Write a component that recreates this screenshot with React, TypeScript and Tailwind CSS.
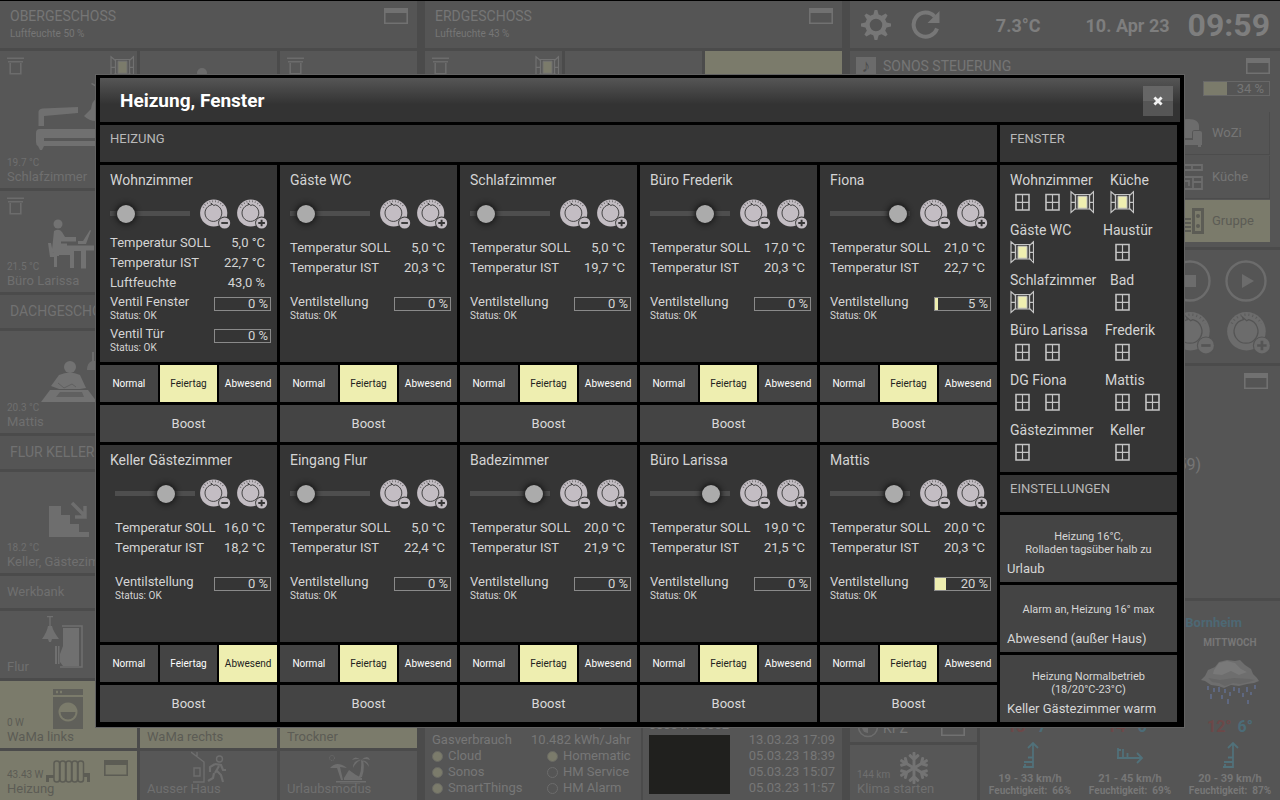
import React from "react";
import { FaRegSnowflake } from "react-icons/fa";

type Meter = { label: string; value: number };
type Room = {
  name: string;
  target: number;
  rows: [string, string][];
  meters: Meter[];
  mode: string;
  dense?: boolean;
  inset?: boolean;
};

const MODES = ["Normal", "Feiertag", "Abwesend"];

function room(name: string, target: number, soll: string, ist: string, valve = 0, mode = "Feiertag", inset = false): Room {
  return {
    name,
    target,
    rows: [
      ["Temperatur SOLL", soll],
      ["Temperatur IST", ist],
    ],
    meters: [{ label: "Ventilstellung", value: valve }],
    mode,
    inset,
  };
}

const ROOMS: Room[][] = [
  [
    {
      name: "Wohnzimmer",
      target: 5,
      rows: [
        ["Temperatur SOLL", "5,0 °C"],
        ["Temperatur IST", "22,7 °C"],
        ["Luftfeuchte", "43,0 %"],
      ],
      meters: [
        { label: "Ventil Fenster", value: 0 },
        { label: "Ventil Tür", value: 0 },
      ],
      mode: "Feiertag",
      dense: true,
    },
    room("Gäste WC", 5, "5,0 °C", "20,3 °C"),
    room("Schlafzimmer", 5, "5,0 °C", "19,7 °C"),
    room("Büro Frederik", 17, "17,0 °C", "20,3 °C"),
    room("Fiona", 21, "21,0 °C", "22,7 °C", 5),
  ],
  [
    room("Keller Gästezimmer", 16, "16,0 °C", "18,2 °C", 0, "Abwesend", true),
    room("Eingang Flur", 5, "5,0 °C", "22,4 °C"),
    room("Badezimmer", 20, "20,0 °C", "21,9 °C"),
    room("Büro Larissa", 19, "19,0 °C", "21,5 °C"),
    room("Mattis", 20, "20,0 °C", "20,3 °C", 20),
  ],
];

type WindowGroup = { name: string; open: boolean[]; pad?: string };
const WINDOWS: [WindowGroup, WindowGroup][] = [
  [{ name: "Wohnzimmer", open: [false, false, true] }, { name: "Küche", open: [true], pad: "pl-[7px]" }],
  [{ name: "Gäste WC", open: [true] }, { name: "Haustür", open: [false] }],
  [{ name: "Schlafzimmer", open: [true] }, { name: "Bad", open: [false], pad: "pl-[7px]" }],
  [{ name: "Büro Larissa", open: [false, false] }, { name: "Frederik", open: [false], pad: "pl-[2px]" }],
  [{ name: "DG Fiona", open: [false, false] }, { name: "Mattis", open: [false, false], pad: "pl-[2px]" }],
  [{ name: "Gästezimmer", open: [false] }, { name: "Keller", open: [false], pad: "pl-[7px]" }],
];

/* ---------- icons ---------- */

function Knob({ sign, className, bg }: { sign: "minus" | "plus"; className?: string; bg: string }) {
  return (
    <svg viewBox="0 0 31 31" className={className} aria-hidden="true">
      <circle cx="13.7" cy="15" r="13.6" fill="currentColor" />
      <path d="M3.300 9.500A11.800 11.800 0 0 1 24.100 9.500" fill="none" stroke={bg} strokeWidth="1.700" strokeDasharray="0.700 2.100" opacity="0.750" />
      <path d="M11.6 6.800 A8.4 8.4 0 1 0 15.2 6.800 L13.9 7.600 L11 5.200 Z" fill="none" stroke={bg} strokeWidth="0.9" />
      <circle cx="24.6" cy="25" r="6.4" fill={bg} />
      <circle cx="24.6" cy="25" r="5.6" fill="currentColor" />
      <path d={sign === "minus" ? "M21.3 25h6.6" : "M21.3 25h6.6M24.6 21.7v6.6"} stroke={bg} strokeWidth="1.9" />
    </svg>
  );
}

function ClosedWindow() {
  return (
    <svg viewBox="0 0 24 24" className="size-6" aria-hidden="true">
      <path d="M6 4.500h13v15.500H6z" fill="none" stroke="#c4c4c4" strokeWidth="1.600" />
      <path d="M12.500 5v15M6 12.300h13" stroke="#c4c4c4" strokeWidth="1.200" />
    </svg>
  );
}

function OpenWindow({ stroke = "#c4c4c4", fill = "#eeeeb0" }: { stroke?: string; fill?: string }) {
  return (
    <svg viewBox="0 0 24 24" className="size-6" aria-hidden="true">
      <path d="M5.500 4.500h14v14.500h-14z" fill="none" stroke={stroke} strokeWidth="1.200" />
      <path d="M8 6.200h9v12H8z" fill={fill} stroke={stroke} strokeWidth="1" />
      <path d="M1 1.700L5.500 5.500v13L1 22.500zM23.500 1.700L19.500 5.500v13l4 4zM1 12.300h4.500M19.500 12.300h4" fill="none" stroke={stroke} strokeWidth="1.200" />
    </svg>
  );
}

function PopupIcon({ className = "text-[#717171]" }: { className?: string }) {
  return (
    <svg viewBox="0 0 24 16" className={"h-4 w-6 shrink-0 " + className} aria-hidden="true">
      <path d="M0 0h24v16H0zM1.6 5v9.4h20.8V5z" fill="currentColor" fillRule="evenodd" />
    </svg>
  );
}

function Shutter() {
  return (
    <svg viewBox="0 0 17 18" className="h-[18px] w-[17px] text-[#6c6c6c]" aria-hidden="true">
      <path d="M0 1.2h17M1 4.8h15M3.2 6v10.8h10.6V6" fill="none" stroke="currentColor" strokeWidth="1.6" />
    </svg>
  );
}

function Bed() {
  return (
    <svg viewBox="0 0 60 70" className="h-[70px] w-[60px] text-[#707070]" aria-hidden="true">
      <path d="M2.500 43V29q0-3 4-3.500L42 24v6L8 33v10zM0 50q0-4 4-4h56v17H8l-2 4H4l-2-4q-2-1-2-4zM8 55v3h52v-3zM60 2l-4-2-1 1 5 3zM60 16q-4 2-5 10l-7 7q5 5 12 5z" fill="currentColor" fillRule="evenodd" />
    </svg>
  );
}

function DeskPerson() {
  return (
    <svg viewBox="0 0 50 50" className="h-[50px] w-[50px] text-[#727272]" aria-hidden="true">
      <circle cx="10" cy="5" r="4.500" fill="currentColor" />
      <path d="M6 12q5-3 8 1l3 5h11v4.500H13v2h6v2h27v5h-8v18h-5V32h-7v17h-4V36H10q-5 0-6-5zM30 22h5l7-11 1 .5L38 25h-8zM0 24h3l2 10h6v3H9v11H6V38H2z" fill="currentColor" />
    </svg>
  );
}

function TablePerson() {
  return (
    <svg viewBox="0 0 56 50" className="h-[50px] w-[56px] text-[#727272]" aria-hidden="true">
      <circle cx="29" cy="15" r="6" fill="currentColor" />
      <path d="M18 23q11-5 21 0l6 13-6 1H18l-8-3z" fill="currentColor" />
      <path d="M9 38h38l9 12H0z" fill="currentColor" />
      <path d="M17 31l6 5 8-4 4 3" fill="none" stroke="#606060" strokeWidth="1" />
      <path d="M19 40h22l2 5H15z" fill="#606060" />
      <path d="M51 0v9q-5 2-5 9h10v-9h-3V0z" fill="currentColor" opacity=".8" />
    </svg>
  );
}

function Stairs() {
  return (
    <svg viewBox="0 0 40 36" className="h-9 w-10 text-[#6e6e6e]" aria-hidden="true">
      <path d="M0 5h12v9h9v9h9v8h10v5H0z" fill="currentColor" />
      <path d="M23 2l12 12M36 5v11H26" fill="none" stroke="currentColor" strokeWidth="3.500" />
    </svg>
  );
}

function DoorLamp() {
  return (
    <svg viewBox="0 0 42 52" className="h-[52px] w-[42px] text-[#707070]" aria-hidden="true">
      <path d="M5 .5h6M8 0v10" stroke="currentColor" strokeWidth="1.3" />
      <path d="M6 10h4q1 5 7 13H10l-1 3H7l-1-3H0q5-7 6-13zM21 12h16v38H21l-3-4v-8l3-8zM13 30h2v18h-2zM16 30h1.500v18H16z" fill="currentColor" />
      <path d="M20 10h20v41H18" fill="none" stroke="currentColor" strokeWidth="1.500" />
    </svg>
  );
}

function Washer() {
  return (
    <svg viewBox="0 0 30 40" className="h-10 w-[30px] text-[#60605a]" aria-hidden="true">
      <path d="M0 0h30v6H0zM3 1.800v2.400h2V1.800zM7 1.800v2.400h2V1.800zM0 8h30v32H0zM15 13.500a9.500 9.500 0 1 0 .01 0z" fill="currentColor" fillRule="evenodd" />
      <path d="M7.500 23h15a7.500 7.500 0 0 1-15 0z" fill="currentColor" />
    </svg>
  );
}

function Radiator() {
  return (
    <svg viewBox="0 0 46 24" className="h-6 w-[46px] text-[#5c5c54]" aria-hidden="true">
      <g fill="none" stroke="currentColor" strokeWidth="1.500">
        {[8, 14, 20, 26, 32].map((x) => (
          <rect key={x} x={x} y="1" width="5.500" height="21" rx="2.500" />
        ))}
      </g>
      <path d="M0 22v-7h8v3H3v4zM38 13h6v9h-3v-5h-3z" fill="currentColor" />
    </svg>
  );
}

function LeaveHouse() {
  return (
    <svg viewBox="0 0 36 34" className="h-[34px] w-9 text-[#6e6e6e]" aria-hidden="true">
      <g fill="none" stroke="currentColor" strokeWidth="1.400">
        <path d="M0 1l13 10v20H2M6 5V1M3 17h6v8H3z" />
        <circle cx="28.500" cy="8" r="3" />
        <path d="M24 13l6 1 2 5h3M24 13l-5 3v5M26 20l4 4 2 7M23 22l-1 5-5 3M28 15l-4 7" strokeWidth="2.200" />
      </g>
    </svg>
  );
}

function Palm() {
  return (
    <svg viewBox="0 0 44 30" className="h-[30px] w-11 text-[#6e6e6e]" aria-hidden="true">
      <path d="M2 14q7-8 17 0l-7-1 3 13h-2L9 14zM33 6q1 10-2 17h3q3-8 1-17zM33 6q-6-5-9 0 6-2 9 0zM33 6q-8 0-8 8 3-6 8-8zM33 6q7-6 9 0-5-2-9 0zM33 6q8 1 8 7-3-5-8-7zM16 24l5-8 7 5 6 3v2H16zM8 27h30v1.500H8zM12 29.500h20V31H12z" fill="currentColor" />
      <circle cx="4" cy="4" r="2.500" fill="none" stroke="currentColor" strokeDasharray="1 1" />
    </svg>
  );
}

function Gear() {
  return (
    <svg viewBox="0 0 30 30" className="size-[30px] text-[#777]" aria-hidden="true">
      <circle cx="15" cy="15" r="8.500" fill="none" stroke="currentColor" strokeWidth="4.500" />
      {[0, 45, 90, 135, 180, 225, 270, 315].map((a) => (
        <path key={a} d="M12.200 5.500L13.600 0h2.800l1.400 5.500z" fill="currentColor" transform={`rotate(${a} 15 15)`} />
      ))}
    </svg>
  );
}

function Reload() {
  return (
    <svg viewBox="0 0 30 30" className="size-[30px] text-[#777]" aria-hidden="true">
      <path d="M23.500 6.500A12 12 0 1 0 26 18.500" fill="none" stroke="currentColor" strokeWidth="4" />
      <path d="M28.500 1v12H16.500z" fill="currentColor" />
    </svg>
  );
}

function RainCloud() {
  return (
    <svg viewBox="0 0 60 48" className="mx-auto h-12 w-[60px]" aria-hidden="true">
      <path d="M1 21l4-4 3-6 7-3 4-5 8-2 8 1 5-1 5 5 6 4 2 5 4 4 2 3-5 2-7 1-8 2-8-1-7 3-6-2-7-1-6-4z" fill="#6e6e6e" />
      <path d="M14 11l5-7 8-2 8 2 6 6 6 3-8 3-8-4-9 4-9-1z" fill="#797979" />
      <path d="M8 19l12 2 14-2 16 1 5 1-6 2-9 2-7-1-8 3-6-3-7-1z" fill="#666666" />
      <path d="M8 27v4M11 35v5M14 29v4M19 28v5M22 36v4M25 30v4M28 40v5M30 33v4M34 28v4M39 29v5M43 34v4M47 28v5M51 33v3M55 26v4M48 41v4" stroke="#606b86" strokeWidth="1.800" />
    </svg>
  );
}

function WindArrow({ east }: { east?: boolean }) {
  return (
    <svg viewBox="0 0 28 28" className={"mx-auto size-7 text-[#51717a] " + (east ? "rotate-90" : "")} aria-hidden="true">
      <path d="M17 27V2M12 7L17 2l5 5M17 26H7M17 21H8M17 16.500h-5M9 26v-3" fill="none" stroke="currentColor" strokeWidth="1.800" />
    </svg>
  );
}

/* ---------- dashboard behind the dialog ---------- */

const PANEL = "bg-[#555555]";
const LIT = "bg-[#7b7b6b] text-[#5c5c55]";

function FloorHeader({ title, humidity }: { title: string; humidity: string }) {
  return (
    <header className={"flex h-[47px] justify-between pt-[7px] pr-[9px] pl-[10px] text-[#767676] " + PANEL}>
      <div>
        <h2 className="text-sm leading-4">{title}</h2>
        <p className="mt-1 text-[10px] leading-3">{humidity}</p>
      </div>
      <PopupIcon />
    </header>
  );
}

function Tile({ height, label, temp, icon, top, lit }: { height: string; label?: string; temp?: string; icon?: React.ReactNode; top?: React.ReactNode; lit?: boolean }) {
  return (
    <div className={`flex min-w-0 flex-col overflow-hidden pl-[7px] ${height} ${lit ? LIT : "bg-[#575757] text-[#6f6f6f]"}`}>
      {top}
      <div className="flex min-h-0 flex-1 items-end whitespace-nowrap">
        {temp && <span className="w-0 text-[10px] leading-3">{temp}</span>}
        {icon}
      </div>
      <p className="h-[19px] shrink-0 text-[13px] leading-4 whitespace-nowrap">{label}</p>
    </div>
  );
}

function Bar({ title }: { title: string }) {
  return <h2 className={"h-[33px] overflow-hidden pl-[10px] text-sm leading-8 whitespace-nowrap text-[#717171] " + PANEL}>{title}</h2>;
}

function UpperFloor() {
  return (
    <section className="flex min-w-0 flex-col gap-[3px] overflow-hidden">
      <FloorHeader title="OBERGESCHOSS" humidity="Luftfeuchte 50 %" />
      <div className="grid grid-cols-3 gap-[3px]">
        <Tile
          height="h-[137px]"
          label="Schlafzimmer"
          temp="19.7 °C"
          top={
            <div className="flex h-5 justify-between pt-[6px] pr-[3px]">
              <Shutter />
              <div className="-mt-[2px]"><OpenWindow stroke="#717171" fill="#7b7b6b" /></div>
            </div>
          }
          icon={<div className="mb-4 ml-[29px]"><Bed /></div>}
        />
        <Tile
          height="h-[137px]"
          top={<svg viewBox="0 0 10 10" className="mt-[17px] ml-[50px] size-[10px] text-[#6c6c6c]" aria-hidden="true"><circle cx="5" cy="5" r="5" fill="currentColor" /></svg>}
        />
        <Tile height="h-[137px]" top={<div className="pt-[6px]"><Shutter /></div>} />
      </div>
      <Tile height="h-[102px]" label="Büro Larissa" temp="21.5 °C" top={<div className="h-5 pt-[6px]"><Shutter /></div>} icon={<div className="mb-1 ml-[41px]"><DeskPerson /></div>} />
      <Bar title="DACHGESCHOSS" />
      <Tile height="h-[102px]" label="Mattis" temp="20.3 °C" icon={<div className="mb-3 ml-[34px]"><TablePerson /></div>} />
      <Bar title="FLUR KELLER" />
      <Tile height="h-[102px]" label="Keller, Gästezimmer" temp="18.2 °C" icon={<div className="mb-[17px] ml-[42px]"><Stairs /></div>} />
      <p className="h-8 bg-[#575757] pl-[7px] text-[13px] leading-8 text-[#6f6f6f]">Werkbank</p>
      <Tile height="h-[67px]" label="Flur" icon={<div className="-mb-[9px] ml-[35px]"><DoorLamp /></div>} />
      <div className="grid grid-cols-3 gap-[3px]">
        <Tile lit height="h-[67px]" label="WaMa links" temp="0 W" icon={<div className="ml-[46px]"><Washer /></div>} />
        <Tile lit height="h-[67px]" label="WaMa rechts" />
        <Tile lit height="h-[67px]" label="Trockner" />
      </div>
      <div className="grid grid-cols-3 gap-[3px]">
        <Tile
          lit
          height="h-[49px]"
          label="Heizung"
          temp="43.43 W"
          icon={
            <div className="mb-[-3px] ml-[39px] flex items-start gap-3">
              <Radiator />
              <PopupIcon className="text-[#5c5c54]" />
            </div>
          }
        />
        <Tile height="h-[49px]" label="Ausser Haus" icon={<div className="mb-[-4px] ml-[44px]"><LeaveHouse /></div>} />
        <Tile height="h-[49px]" label="Urlaubsmodus" icon={<div className="mb-[-3px] ml-[41px]"><Palm /></div>} />
      </div>
    </section>
  );
}

function Lamp({ on, label }: { on?: boolean; label: string }) {
  return (
    <li className="flex h-4 items-center gap-[5px]">
      <span className={on ? "size-[11px] rounded-full border border-[#6a6a64] bg-[#7b7b6b]" : "size-[11px] rounded-full border border-[#6c6c6c]"} />
      {label}
    </li>
  );
}

function GroundFloor() {
  return (
    <section className="flex min-w-0 flex-col gap-[3px]">
      <FloorHeader title="ERDGESCHOSS" humidity="Luftfeuchte 43 %" />
      <div className="grid grid-cols-3 gap-[3px]">
        <Tile
          height="h-[137px]"
          top={
            <div className="flex justify-between pt-[6px] pr-[3px]">
              <Shutter />
              <div className="-mt-[2px]"><OpenWindow stroke="#717171" fill="#7b7b6b" /></div>
            </div>
          }
        />
        <Tile height="h-[137px]" />
        <Tile lit height="h-[137px]" />
      </div>
      <div className="grid flex-1 grid-cols-[215fr_200fr] gap-[2px] text-[13px] leading-4 text-[#777777]">
        <div className={"flex flex-col justify-end pr-[10px] pb-1 pl-[7px] " + PANEL}>
          <dl className="grid grid-cols-[1fr_auto] whitespace-nowrap">
            <dt>Stromverbrauch</dt>
            <dd className="text-right">4.744 kWh/Jahr</dd>
            <dt>Gasverbrauch</dt>
            <dd className="text-right">10.482 kWh/Jahr</dd>
          </dl>
          <div className="grid grid-cols-[115px_1fr] whitespace-nowrap">
            <ul>
              <Lamp on label="Cloud" />
              <Lamp on label="Sonos" />
              <Lamp on label="SmartThings" />
            </ul>
            <ul>
              <Lamp on label="Homematic" />
              <Lamp label="HM Service" />
              <Lamp label="HM Alarm" />
            </ul>
          </div>
        </div>
        <div className={"flex items-end justify-between pr-[7px] pb-1 pl-[6px] " + PANEL}>
          <div className="mb-[2px] w-[81px]">
            <p className="mb-[2px]">00001710002</p>
            <div className="h-[59px] bg-[#20201e]" />
          </div>
          <ul className="text-right">
            <li>05.04.23 17:10</li>
            <li>13.03.23 17:09</li>
            <li>05.03.23 18:39</li>
            <li>05.03.23 15:07</li>
            <li>05.03.23 11:57</li>
          </ul>
        </div>
      </div>
    </section>
  );
}

function Day({ name, high, low, wind, humidity, east }: { name?: string; high: string; low: string; wind: string; humidity: string; east?: boolean }) {
  return (
    <li className="text-center font-bold whitespace-nowrap text-[#777777]">
      <h3 className="h-5 pt-px text-[10px] leading-5">{name}</h3>
      <div className="mt-[7px]"><RainCloud /></div>
      <p className="mt-2.5 flex justify-center gap-1.5 text-base leading-5">
        <span className="text-[#6c4848]">{high}</span>
        <span className="text-[#4c6c78]">{low}</span>
      </p>
      <div className="mt-1"><WindArrow east={east} /></div>
      <p className="mt-1 text-[11px] leading-3">{wind}</p>
      <p className="text-[10px] leading-3">Feuchtigkeit: &nbsp;{humidity}</p>
    </li>
  );
}

function MediaColumn() {
  const zone = "flex h-[43px] items-center border-r border-b border-[#4c4c4c]";
  return (
    <section className="flex min-w-0 flex-col gap-[3px] text-[#757575]">
      <header className={"flex h-[47px] items-center justify-between pr-[10px] pl-[11px] font-bold text-[#7e7e7e] " + PANEL}>
        <div className="flex gap-5">
          <Gear />
          <Reload />
        </div>
        <div className="flex items-center">
          <span className="mr-[45px] pt-[2px] text-lg">7.3°C</span>
          <span className="mr-[18px] pt-[2px] text-lg">10. Apr 23</span>
          <time className="text-[32px] leading-10">09:59</time>
        </div>
      </header>
      <div className={"h-[196px] pt-[5px] pr-[10px] pl-[6px] " + PANEL}>
        <div className="flex h-5 items-center justify-between">
          <div className="flex items-center gap-[7px]">
            <span className="flex h-[18px] w-5 items-center justify-center bg-[#6b6b6b] text-lg leading-none text-[#4c4c4c]">♪</span>
            <h2 className="text-sm">SONOS STEUERUNG</h2>
          </div>
          <PopupIcon />
        </div>
        <div className="mt-[5px] ml-auto flex h-[15px] w-[67px] items-center border border-[#686868] text-[13px]">
          <span className="h-full w-[35%] bg-[#7b7b6b]" />
          <span className="flex-1 pr-[5px] text-right">34 %</span>
        </div>
        <div className="mt-4 ml-auto w-[110px] text-[13px]">
          <p className={zone}>
            <svg viewBox="0 0 30 30" className="mr-[9px] ml-[13px] size-[30px] text-[#6c6c6c]" aria-hidden="true"><path d="M3 10q0-9 12-9t11 9v2h-4q-3 0-3 3v5H3zM20 14q0-1 1-1h6q2 0 2 2v12h-1v2h-3v-2H3v-5h17z" fill="currentColor" /></svg>
            WoZi
          </p>
          <p className={"mt-px " + zone}>
            <svg viewBox="0 0 30 30" className="mr-[9px] ml-[13px] size-[30px] text-[#6c6c6c]" aria-hidden="true"><path d="M0 3h29v5H0zM19 3v5M0 15h29v12H0zM20 15v12M8 24v-5h8v5M20 20h9" fill="none" stroke="currentColor" strokeWidth="1.800" /></svg>
            Küche
          </p>
          <p className={"mt-px flex h-[42px] items-center " + LIT}>
            <svg viewBox="0 0 30 30" className="mr-[7px] ml-[15px] size-[30px]" aria-hidden="true"><path d="M17 2h12v26H17zM20 5v20h6V5zM0 12h16v2H0zM0 16h16v2H0zM0 20h16v2H0zM0 24h16v2H0z" fill="currentColor" fillRule="evenodd" /><circle cx="23" cy="10" r="2" fill="currentColor" /><circle cx="23" cy="20" r="2" fill="currentColor" /></svg>
            Gruppe
          </p>
        </div>
      </div>
      <div className={"flex h-[113px] flex-col items-end gap-2 pt-[10px] pr-[9px] text-[#6c6c6c] " + PANEL}>
        <svg viewBox="0 0 98 42" className="mr-1 h-[42px] w-[98px]" aria-hidden="true">
          <g fill="none" stroke="currentColor" strokeWidth="2.400"><circle cx="21" cy="21" r="19.500" /><circle cx="77" cy="21" r="19.500" /></g>
          <path d="M15 15h12v12H15zM73 14l12 7-12 7z" fill="currentColor" />
        </svg>
        <div className="flex gap-3">
          <Knob sign="minus" bg="#555555" className="size-11" />
          <Knob sign="plus" bg="#555555" className="size-11" />
        </div>
      </div>
      <div className={"flex flex-1 flex-col items-end pt-[7px] pr-3 " + PANEL}>
        <PopupIcon />
        <p className="mt-[66px] mr-[67px] text-base leading-5">(16:59)</p>
      </div>
      <div className="grid h-[199px] grid-cols-[127fr_300fr] gap-[3px]">
        <div className="flex flex-col gap-[3px]">
          <div className="flex flex-1 items-end bg-[#575757] pr-3 pb-1 pl-[7px]">
            <svg viewBox="0 0 22 22" className="size-[22px] text-[#6c6c6c]" aria-hidden="true"><circle cx="11" cy="11" r="9.500" fill="none" stroke="currentColor" strokeWidth="1.500" /><path d="M11 5a6 6 0 0 0 0 12z" fill="currentColor" /></svg>
            <h2 className="ml-1 text-sm leading-5">KFZ</h2>
            <div className="mb-[2px] ml-auto"><PopupIcon /></div>
          </div>
          <Tile height="h-[55px]" label="Klima starten" temp="144 km" icon={<FaRegSnowflake className="mb-[-3px] ml-[41px] size-8 text-[#737373]" />} />
        </div>
        <div className={"overflow-hidden pt-3 " + PANEL}>
          <h2 className="pr-[38px] text-right text-[13px] leading-5 font-bold text-[#4d6874]">Wetter Bornheim</h2>
          <ul className="-mt-px grid grid-cols-3">
            <Day high="13°" low="7°" wind="19 - 33 km/h" humidity="66%" />
            <Day high="14°" low="6°" wind="21 - 45 km/h" humidity="69%" east />
            <Day name="MITTWOCH" high="12°" low="6°" wind="20 - 39 km/h" humidity="87%" />
          </ul>
        </div>
      </div>
    </section>
  );
}

/* ---------- dialog ---------- */

const CELL = "bg-[#353535]";
const RAISED = "bg-[#444444]";

function RoomCard({ data }: { data: Room }) {
  const inset = data.inset ? "pl-[5px]" : "";
  return (
    <div className="flex min-w-0 flex-col gap-[3px]">
      <div className={"h-[197px] pt-[5px] pr-[6px] pl-[10px] text-[13px] text-[#d4d4d4] " + CELL}>
        <h3 className="text-sm leading-5 whitespace-nowrap">{data.name}</h3>
        <div className="mt-2 flex h-[31px] items-center">
          <div className={"flex " + inset}>
            <input
              type="range"
              min={3}
              max={22}
              defaultValue={data.target}
              aria-label={`Solltemperatur ${data.name}`}
              className="h-[18px] w-20 appearance-none bg-transparent [&::-webkit-slider-runnable-track]:h-[5px] [&::-webkit-slider-runnable-track]:bg-[#4e4e4e] [&::-webkit-slider-thumb]:-mt-[6px] [&::-webkit-slider-thumb]:size-[18px] [&::-webkit-slider-thumb]:appearance-none [&::-webkit-slider-thumb]:rounded-full [&::-webkit-slider-thumb]:bg-[#ababab] [&::-webkit-slider-thumb]:shadow-[0_0_5px_2px_#1c1c1c]"
            />
          </div>
          <div className="ml-auto flex gap-[6px] pr-[3px]">
            <button type="button" aria-label="Kälter"><Knob sign="minus" bg="#353535" className="size-[31px] text-[#c3bdc3]" /></button>
            <button type="button" aria-label="Wärmer"><Knob sign="plus" bg="#353535" className="size-[31px] text-[#c3bdc3]" /></button>
          </div>
        </div>
        <dl className={`${inset} pr-[6px] ${data.dense ? "mt-1" : "mt-[9px]"}`}>
          {data.rows.map(([k, v]) => (
            <div key={k} className="flex justify-between leading-5 whitespace-nowrap">
              <dt>{k}</dt>
              <dd>{v}</dd>
            </div>
          ))}
        </dl>
        <div className={`${inset} flex flex-col gap-1 ${data.dense ? "mt-px" : "mt-4"}`}>
          {data.meters.map((m) => (
            <div key={m.label} className="flex h-7 items-start justify-between">
              <div className="whitespace-nowrap">
                <p className="leading-4">{m.label}</p>
                <p className="text-[10px] leading-3">Status: OK</p>
              </div>
              <div className="mt-[3px] flex h-[14px] w-[57px] items-center border border-[#8a8a8a]">
                <span className="h-full shrink-0 bg-[#eeeeb0]" style={{ width: `${m.value}%` }} />
                <span className="flex-1 pr-[2px] text-right leading-3 whitespace-nowrap">{m.value} %</span>
              </div>
            </div>
          ))}
        </div>
      </div>
      <div className="grid h-[37px] grid-cols-3 gap-[2px]">
        {MODES.map((mode) => (
          <button key={mode} type="button" className={"text-[10px] " + (mode === data.mode ? "bg-[#eeeeb0] text-[#222]" : "bg-[#444444] text-white")}>
            {mode}
          </button>
        ))}
      </div>
      <button type="button" className={"h-[37px] pt-[2px] text-[13px] text-[#dadada] " + RAISED}>Boost</button>
    </div>
  );
}

function WindowCell({ group, second }: { group: WindowGroup; second?: boolean }) {
  return (
    <div>
      <h3 className={"text-sm leading-5 whitespace-nowrap " + (group.pad ?? "")}>{group.name}</h3>
      <div className={"flex h-[30px] gap-[6px] " + (second ? "pl-[7px]" : "")}>
        {group.open.map((open, i) => (open ? <OpenWindow key={i} /> : <ClosedWindow key={i} />))}
      </div>
    </div>
  );
}

function Setting({ note, label, pad }: { note: React.ReactNode; label: string; pad: string }) {
  return (
    <button type="button" className={`flex h-[67px] flex-col items-start pb-[3px] text-[#d6d6d6] ${RAISED} ${pad}`}>
      <span className="w-full text-center text-[11px] leading-[13px]">{note}</span>
      <span className="mt-auto pl-[7px] text-[13px] leading-5 whitespace-nowrap">{label}</span>
    </button>
  );
}

function Dialog() {
  const heading = "h-[37px] pt-1 pl-[10px] text-[13px] leading-5 text-[#b9b9b9] " + CELL;
  return (
    <div role="dialog" aria-modal="true" aria-labelledby="dialog-title" className="w-[85%] border border-black bg-black pt-[2px] pr-[3px] pb-1 pl-[3px] shadow-[0_0_0_1px_#626262]">
      <header className="flex h-11 items-center justify-between bg-linear-to-b from-[#565656] to-[#333333] to-60% pr-[7px] pl-5">
        <h1 id="dialog-title" className="pt-[2px] text-[19px] leading-6 font-bold text-white">Heizung, Fenster</h1>
        <button type="button" aria-label="Schließen" className="mt-[2px] flex size-[30px] items-center justify-center bg-linear-to-b from-[#666666] from-50% to-[#565656] to-50%">
          <svg viewBox="0 0 10 10" className="size-[10px]" aria-hidden="true"><path d="M1.400 1.400l7.200 7.200M8.600 1.400L1.400 8.600" stroke="#f2f2f2" strokeWidth="2.800" /></svg>
        </button>
      </header>
      <div className="mt-[3px] grid grid-cols-6 gap-[3px] pr-[3px]">
        <div className="col-span-5 flex flex-col gap-[3px]">
          <h2 className={heading}>HEIZUNG</h2>
          {ROOMS.map((line, i) => (
            <div key={i} className="grid grid-cols-5 gap-[3px]">
              {line.map((r) => (
                <RoomCard key={r.name} data={r} />
              ))}
            </div>
          ))}
        </div>
        <div className="flex flex-col gap-[3px]">
          <h2 className={heading}>FENSTER</h2>
          <div className={"grid h-[307px] grid-cols-[93px_1fr] content-start pt-[5px] pl-[10px] text-[#d4d4d4] " + CELL}>
            {WINDOWS.map(([a, b]) => (
              <React.Fragment key={a.name}>
                <WindowCell group={a} />
                <WindowCell group={b} second />
              </React.Fragment>
            ))}
          </div>
          <h2 className={heading}>EINSTELLUNGEN</h2>
          <Setting pad="pt-[15px]" label="Urlaub" note={<>Heizung 16°C,<br />Rolladen tagsüber halb zu</>} />
          <Setting pad="pt-[18px]" label="Abwesend (außer Haus)" note="Alarm an, Heizung 16° max" />
          <Setting pad="pt-[15px]" label="Keller Gästezimmer warm" note={<>Heizung Normalbetrieb<br />(18/20°C-23°C)</>} />
        </div>
      </div>
    </div>
  );
}

export default function App() {
  return (
    <div className="relative h-screen overflow-hidden border-t border-black bg-[#4b4b4b] font-['Roboto',sans-serif]">
      <main className="grid h-full grid-cols-[417fr_417fr_430fr] gap-2">
        <UpperFloor />
        <GroundFloor />
        <MediaColumn />
      </main>
      <div className="absolute inset-0 flex items-center justify-center">
        <Dialog />
      </div>
    </div>
  );
}
